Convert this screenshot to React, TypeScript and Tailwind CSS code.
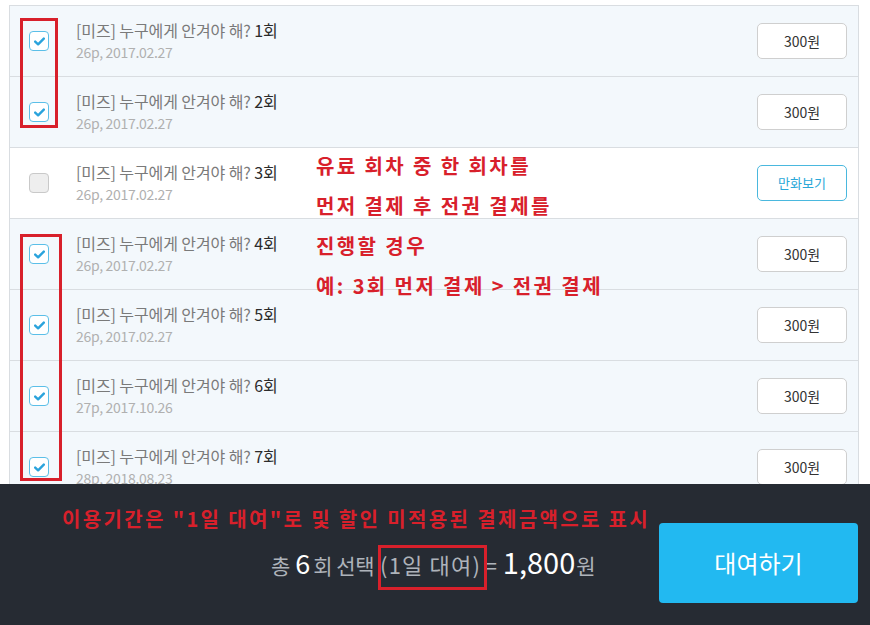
import React from "react";

const rows = [
  { n: 1, date: "26p, 2017.02.27", checked: true },
  { n: 2, date: "26p, 2017.02.27", checked: true },
  { n: 3, date: "26p, 2017.02.27", checked: false },
  { n: 4, date: "26p, 2017.02.27", checked: true },
  { n: 5, date: "26p, 2017.02.27", checked: true },
  { n: 6, date: "27p, 2017.10.26", checked: true },
  { n: 7, date: "28p, 2018.08.23", checked: true },
];

function Check({ checked }: { checked: boolean }) {
  if (!checked) {
    return <div className="w-[20px] h-[20px] rounded-[4px] border border-[#c9c9c9] bg-[#eeeeee] shrink-0" />;
  }
  return (
    <div className="w-[20px] h-[20px] rounded-[4px] border border-[#5bbfe8] bg-white shrink-0 flex items-center justify-center">
      <svg width="11" height="9" viewBox="0 0 11 9">
        <path d="M1.2 4.6 L4.1 7.3 L9.8 1.6" fill="none" stroke="#2aa3dc" strokeWidth="2.4" strokeLinecap="round" strokeLinejoin="round" />
      </svg>
    </div>
  );
}

export default function App() {
  return (
    <div
      className="relative w-[870px] h-[625px] overflow-hidden bg-white"
      style={{ fontFamily: '"Noto Sans CJK KR", "Noto Sans", sans-serif' }}
    >
      <div className="ml-[9px] mt-[5px] w-[850px] border-t border-l border-r border-[#d9dde1]">
        {rows.map((r) => (
          <div
            key={r.n}
            className={`h-[71px] border-b border-[#d9dde1] flex items-center pl-[19px] pr-[11px] ${r.checked ? "bg-[#f3f8fc]" : "bg-white"}`}
          >
            <Check checked={r.checked} />
            <div className="ml-[27px] flex-1 flex flex-col">
              <div className="text-[16px] leading-[22px] text-[#7a7a7a] tracking-[-0.1px]">
                [미즈] 누구에게 안겨야 해? <span className="text-[#2b2b2b]">{r.n}회</span>
              </div>
              <div className="text-[14px] leading-[22px] text-[#b0b0b0] tracking-[-0.3px]">{r.date}</div>
            </div>
            {r.checked ? (
              <div className="w-[90px] h-[36px] rounded-[5px] border border-[#cfcfcf] bg-white flex items-center justify-center text-[14px] text-[#333]">
                300원
              </div>
            ) : (
              <div className="w-[90px] h-[36px] rounded-[5px] border border-[#4ab8de] bg-white flex items-center justify-center text-[13px] text-[#2aa8d8]">
                만화보기
              </div>
            )}
          </div>
        ))}
      </div>

      {/* annotation boxes */}
      <div className="absolute left-[20px] top-[18px] w-[38px] h-[110px] border-[3px] border-[#d8202b]" />
      <div className="absolute left-[20px] top-[234px] w-[42px] h-[247px] border-[3px] border-[#d8202b]" />

      {/* annotation text */}
      <div className="absolute left-[316px] top-[146px] text-[20px] leading-[40px] font-bold text-[#d8202b] tracking-[2.4px] whitespace-pre">
        <div>유료 회차 중 한 회차를</div>
        <div>먼저 결제 후 전권 결제를</div>
        <div>진행할 경우</div>
        <div>예: 3회 먼저 결제 &gt; 전권 결제</div>
      </div>

      {/* bottom bar */}
      <div className="absolute left-0 bottom-0 w-[870px] h-[141px] bg-[#262b33] flex">
        <div className="flex-1 flex flex-col">
          <div className="mt-[22px] pl-[62px] text-[20px] leading-[26px] font-bold text-[#d8202b] tracking-[2.35px] whitespace-nowrap">
            이용기간은 "1일 대여"로 및 할인 미적용된 결제금액으로 표시
          </div>
          <div className="mt-[8px] pl-[271px] flex items-baseline text-[#aeb3ba] whitespace-nowrap">
            <span className="text-[21px]">총</span>
            <span className="text-[27px] text-white ml-[5px]">6</span>
            <span className="text-[21px] ml-[3px] tracking-[-0.5px]">회 선택</span>
            <span className="text-[22px] ml-[6px] tracking-[1.2px]">(1일 대여)</span>
            <span className="text-[21px] ml-[4px]">=</span>
            <span className="text-[29px] text-white ml-[6px]">1,800</span>
            <span className="text-[21px] ml-[1px]">원</span>
          </div>
        </div>
        <div className="mt-[39px] mr-[12px] w-[199px] h-[80px] rounded-[4px] bg-[#22b9f1] flex items-center justify-center text-[24px] text-white">
          대여하기
        </div>
      </div>
      <div className="absolute left-[378px] top-[545px] w-[109px] h-[45px] border-[3px] border-[#d8202b]" />
    </div>
  );
}
